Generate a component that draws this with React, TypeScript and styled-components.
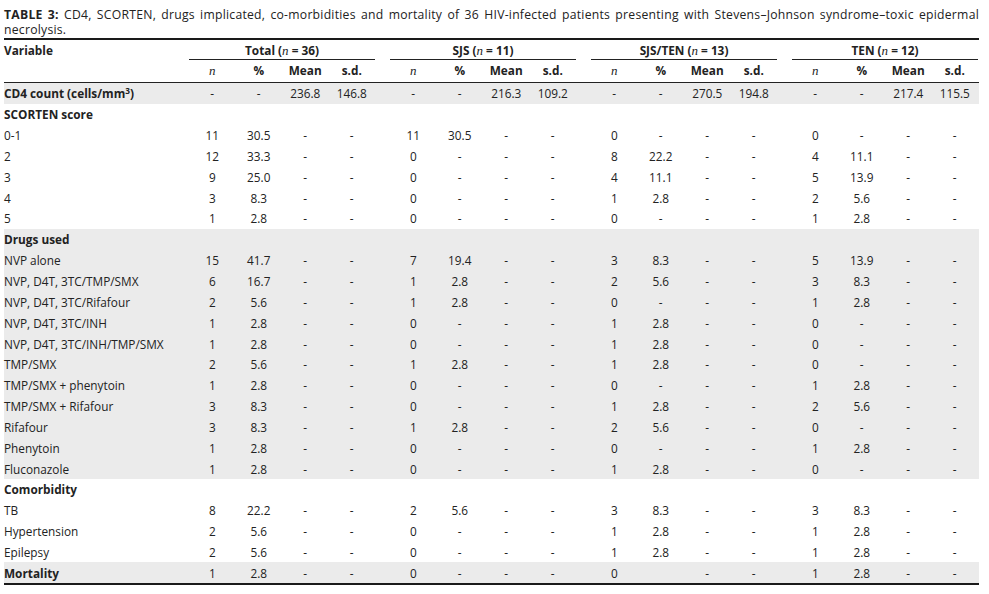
import React from "react";
import styled, { createGlobalStyle } from "styled-components";

const Global = createGlobalStyle`
  html, body { margin: 0; padding: 0; background: #fff; }
  body { font-family: "Open Sans", "Lato", "Liberation Sans", sans-serif; color: #222; }
`;

const COLS = "185px repeat(4, 46.5px) 15px repeat(4, 46.5px) 15px repeat(4, 46.5px) 15px repeat(4, 46.5px)";

const Page = styled.div`
  padding: 7px 10px 0 4px;
  width: 975px;
`;

const Title = styled.p`
  margin: 0;
  font-size: 12.2px;
  letter-spacing: 0.25px;
  line-height: 15px;
  text-align: justify;
  height: 31px;
  b { font-weight: 700; }
`;

const Table = styled.div`
  border-top: 2px solid #1a1a1a;
  border-bottom: 2px solid #1a1a1a;
  font-size: 11.8px;
`;

const HeadRow = styled.div<{ $h: number; $line?: boolean }>`
  display: grid;
  grid-template-columns: ${COLS};
  height: ${(p) => p.$h}px;
  border-bottom: ${(p) => (p.$line ? "1px solid #222" : "none")};
  font-weight: 700;
`;

const VarHead = styled.div`
  grid-column: 1;
  padding-top: 2px;
`;

const GroupHead = styled.div<{ $col: number }>`
  grid-column: ${(p) => p.$col} / span 4;
  text-align: center;
  border-bottom: 1px solid #222;
  padding-top: 2px;
`;

const SubHead = styled.div<{ $col: number }>`
  grid-column: ${(p) => p.$col};
  text-align: center;
  padding-top: 2px;
`;

const It = styled.i`
  font-family: "Liberation Serif", serif;
  font-style: italic;
  font-weight: 400;
  font-size: 13px;
`;

const Row = styled.div<{ $gray?: boolean }>`
  display: grid;
  grid-template-columns: ${COLS};
  height: 20.85px;
  align-items: center;
  background: ${(p) => (p.$gray ? "#ebebeb" : "transparent")};
`;

const Label = styled.div<{ $bold?: boolean }>`
  grid-column: 1;
  font-weight: ${(p) => (p.$bold ? 700 : 400)};
  white-space: nowrap;
`;

const Cell = styled.div<{ $col: number }>`
  grid-column: ${(p) => p.$col};
  text-align: center;
  white-space: nowrap;
`;

const Sup = styled.sup`
  font-size: 0.7em;
  vertical-align: 0.45em;
  line-height: 0;
`;

type Grp = [string, string, string?, string?];
type RowData = { label: React.ReactNode; bold?: boolean; gray?: boolean; groups?: Grp[] };

const groupStarts = [2, 7, 12, 17];

const rows: RowData[] = [
  {
    label: (
      <>
        CD4 count (cells/mm<Sup>3</Sup>)
      </>
    ),
    bold: true,
    gray: true,
    groups: [
      ["-", "-", "236.8", "146.8"],
      ["-", "-", "216.3", "109.2"],
      ["-", "-", "270.5", "194.8"],
      ["-", "-", "217.4", "115.5"],
    ],
  },
  { label: "SCORTEN score", bold: true },
  { label: "0-1", groups: [["11", "30.5"], ["11", "30.5"], ["0", "-"], ["0", "-"]] },
  { label: "2", groups: [["12", "33.3"], ["0", "-"], ["8", "22.2"], ["4", "11.1"]] },
  { label: "3", groups: [["9", "25.0"], ["0", "-"], ["4", "11.1"], ["5", "13.9"]] },
  { label: "4", groups: [["3", "8.3"], ["0", "-"], ["1", "2.8"], ["2", "5.6"]] },
  { label: "5", groups: [["1", "2.8"], ["0", "-"], ["0", "-"], ["1", "2.8"]] },
  { label: "Drugs used", bold: true, gray: true },
  { label: "NVP alone", gray: true, groups: [["15", "41.7"], ["7", "19.4"], ["3", "8.3"], ["5", "13.9"]] },
  { label: "NVP, D4T, 3TC/TMP/SMX", gray: true, groups: [["6", "16.7"], ["1", "2.8"], ["2", "5.6"], ["3", "8.3"]] },
  { label: "NVP, D4T, 3TC/Rifafour", gray: true, groups: [["2", "5.6"], ["1", "2.8"], ["0", "-"], ["1", "2.8"]] },
  { label: "NVP, D4T, 3TC/INH", gray: true, groups: [["1", "2.8"], ["0", "-"], ["1", "2.8"], ["0", "-"]] },
  { label: "NVP, D4T, 3TC/INH/TMP/SMX", gray: true, groups: [["1", "2.8"], ["0", "-"], ["1", "2.8"], ["0", "-"]] },
  { label: "TMP/SMX", gray: true, groups: [["2", "5.6"], ["1", "2.8"], ["1", "2.8"], ["0", "-"]] },
  { label: "TMP/SMX + phenytoin", gray: true, groups: [["1", "2.8"], ["0", "-"], ["0", "-"], ["1", "2.8"]] },
  { label: "TMP/SMX + Rifafour", gray: true, groups: [["3", "8.3"], ["0", "-"], ["1", "2.8"], ["2", "5.6"]] },
  { label: "Rifafour", gray: true, groups: [["3", "8.3"], ["1", "2.8"], ["2", "5.6"], ["0", "-"]] },
  { label: "Phenytoin", gray: true, groups: [["1", "2.8"], ["0", "-"], ["0", "-"], ["1", "2.8"]] },
  { label: "Fluconazole", gray: true, groups: [["1", "2.8"], ["0", "-"], ["1", "2.8"], ["0", "-"]] },
  { label: "Comorbidity", bold: true },
  { label: "TB", groups: [["8", "22.2"], ["2", "5.6"], ["3", "8.3"], ["3", "8.3"]] },
  { label: "Hypertension", groups: [["2", "5.6"], ["0", "-"], ["1", "2.8"], ["1", "2.8"]] },
  { label: "Epilepsy", groups: [["2", "5.6"], ["0", "-"], ["1", "2.8"], ["1", "2.8"]] },
  { label: "Mortality", bold: true, gray: true, groups: [["1", "2.8"], ["0", "-"], ["0", ""], ["1", "2.8"]] },
];

const groupTitles = [
  ["Total", "36"],
  ["SJS", "11"],
  ["SJS/TEN", "13"],
  ["TEN", "12"],
];

export default function App() {
  return (
    <Page>
      <Global />
      <Title>
        <b>TABLE 3:</b> CD4, SCORTEN, drugs implicated, co-morbidities and mortality of 36 HIV-infected patients
        presenting with Stevens–Johnson syndrome–toxic epidermal necrolysis.
      </Title>
      <Table>
        <HeadRow $h={20}>
          <VarHead>Variable</VarHead>
          {groupTitles.map(([t, n], i) => (
            <GroupHead key={t} $col={groupStarts[i]}>
              {t} (<It>n</It> = {n})
            </GroupHead>
          ))}
        </HeadRow>
        <HeadRow $h={22} $line>
          {groupStarts.map((s) => (
            <React.Fragment key={s}>
              <SubHead $col={s}>
                <It>n</It>
              </SubHead>
              <SubHead $col={s + 1}>%</SubHead>
              <SubHead $col={s + 2}>Mean</SubHead>
              <SubHead $col={s + 3}>s.d.</SubHead>
            </React.Fragment>
          ))}
        </HeadRow>
        {rows.map((r, ri) => (
          <Row key={ri} $gray={r.gray}>
            <Label $bold={r.bold}>{r.label}</Label>
            {r.groups &&
              r.groups.map((g, gi) =>
                [g[0], g[1], g[2] ?? "-", g[3] ?? "-"].map((v, vi) => (
                  <Cell key={`${gi}-${vi}`} $col={groupStarts[gi] + vi}>
                    {v}
                  </Cell>
                ))
              )}
          </Row>
        ))}
      </Table>
    </Page>
  );
}
